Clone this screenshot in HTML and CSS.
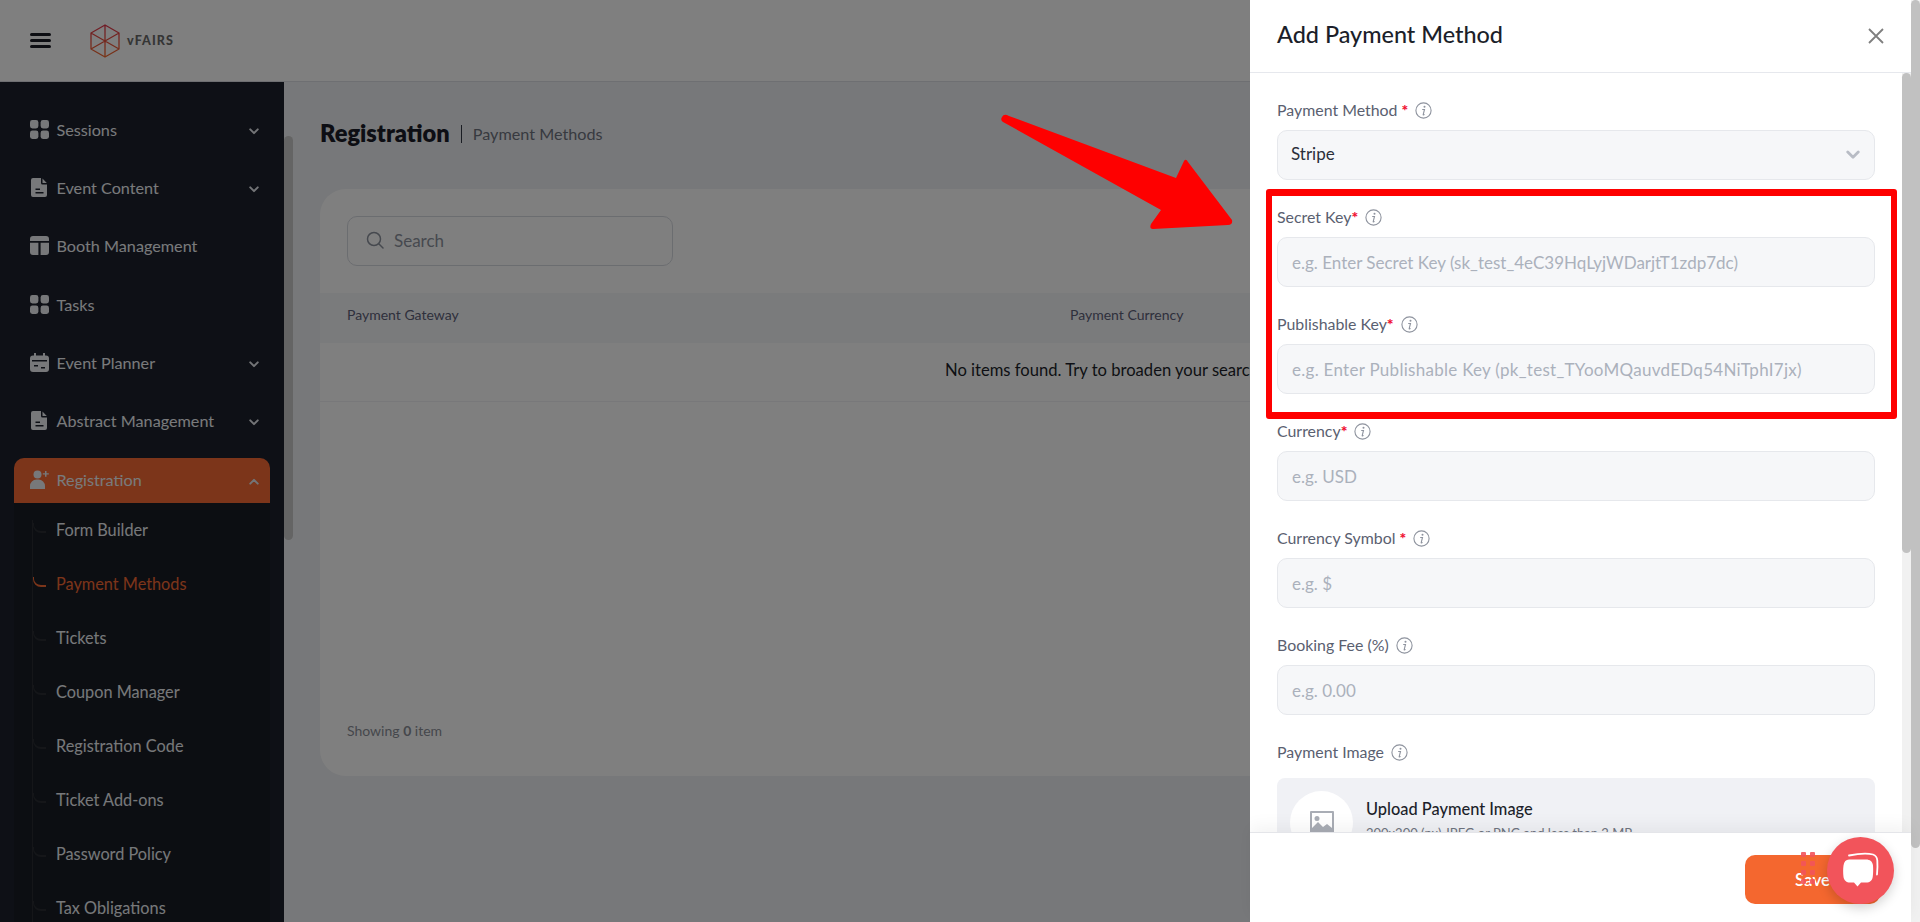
FILE: index.html
```html
<!DOCTYPE html>
<html lang="en">
<head>
<meta charset="utf-8">
<title>Payment Methods</title>
<link rel="stylesheet" href="styles.css">
</head>
<body>
<svg class="defs" width="0" height="0" aria-hidden="true">
  <symbol id="i-grid" viewBox="0 0 19 19"><rect x="0" y="0" width="8.4" height="8.4" rx="2.4"/><rect x="10.6" y="0" width="8.4" height="8.4" rx="2.4"/><rect x="0" y="10.6" width="8.4" height="8.4" rx="2.4"/><rect x="10.6" y="10.6" width="8.4" height="8.4" rx="2.4"/></symbol>
  <symbol id="i-doc" viewBox="0 0 19 19"><path fill-rule="evenodd" d="M3 0h8v5a1.5 1.5 0 0 0 1.500 1.500H17V17a2 2 0 0 1-2 2H3a2 2 0 0 1-2-2V2a2 2 0 0 1 2-2zM12.500 0.500 16.800 5H12.500zM5.500 10.500v1.400h4.500v-1.400zM5.500 14v1.400h8V14z"/></symbol>
  <symbol id="i-booth" viewBox="0 0 19 19"><path d="M3 0h13a3 3 0 0 1 3 3v2H0V3a3 3 0 0 1 3-3zM0 6.800h8.400V19H3a3 3 0 0 1-3-3zM10.600 6.800H19V16a3 3 0 0 1-3 3h-5.400z"/></symbol>
  <symbol id="i-cal" viewBox="0 0 19 19"><path fill-rule="evenodd" d="M4 0h2v2.500H13V0h2v2.500h1a3 3 0 0 1 3 3V16a3 3 0 0 1-3 3H3a3 3 0 0 1-3-3V5.500a3 3 0 0 1 3-3h1zM2 7v1.600h15V7zM4 12v1.600h4V12zM11 14v1.600h4V14z"/></symbol>
  <symbol id="i-user" viewBox="0 0 19 19"><circle cx="7.500" cy="4.500" r="4"/><path d="M0 19v-3a6.500 6.500 0 0 1 6.500-6.500h2A6.500 6.500 0 0 1 15 16v3z"/><path d="M15 1h1.500v2.200h2.300v1.400h-2.300v2.200H15V4.600h-2.200V3.200H15z"/></symbol>
  <symbol id="i-chev" viewBox="0 0 12 8"><path d="M1.500 1.500 6 6l4.500-4.500" fill="none" stroke="currentColor" stroke-width="2.400" stroke-linecap="round" stroke-linejoin="round"/></symbol>
  <symbol id="i-info" viewBox="0 0 17 17"><circle cx="8.500" cy="8.500" r="7.600" fill="none" stroke="currentColor" stroke-width="1.100"/><circle cx="9.500" cy="4.800" r="1" fill="currentColor"/><path d="M7.200 7.500h2.300l-1.300 5.100c-.1.500.4.600 1.300-.2" fill="none" stroke="currentColor" stroke-width="1.100"/></symbol>
</svg>

<div class="app">
  <header class="topbar">
    <div class="burger"><span></span><span></span><span></span></div>
    <svg class="logo" viewBox="0 0 30 34" width="30" height="34">
      <defs><linearGradient id="lg" x1="0" y1="0" x2="0" y2="1"><stop offset="0" stop-color="#e0374e"/><stop offset="1" stop-color="#f26a2e"/></linearGradient></defs>
      <path d="M15 1 29 9v16L15 33 1 25V9zM15 1v32M1 9l28 16M29 9 1 25" fill="none" stroke="url(#lg)" stroke-width="1.300" stroke-linejoin="round"/>
    </svg>
    <span class="logo-text">vFAIRS</span>
  </header>
  <div class="workspace">
    <nav class="sidebar">
      <a class="nav-item"><svg class="nav-icon"><use href="#i-grid"/></svg><span>Sessions</span><svg class="chev"><use href="#i-chev"/></svg></a>
      <a class="nav-item"><svg class="nav-icon"><use href="#i-doc"/></svg><span>Event Content</span><svg class="chev"><use href="#i-chev"/></svg></a>
      <a class="nav-item"><svg class="nav-icon"><use href="#i-booth"/></svg><span>Booth Management</span></a>
      <a class="nav-item"><svg class="nav-icon"><use href="#i-grid"/></svg><span>Tasks</span></a>
      <a class="nav-item"><svg class="nav-icon"><use href="#i-cal"/></svg><span>Event Planner</span><svg class="chev"><use href="#i-chev"/></svg></a>
      <a class="nav-item"><svg class="nav-icon"><use href="#i-doc"/></svg><span>Abstract Management</span><svg class="chev"><use href="#i-chev"/></svg></a>
      <a class="nav-item nav-open"><svg class="nav-icon"><use href="#i-user"/></svg><span>Registration</span><svg class="chev chev-up"><use href="#i-chev"/></svg></a>
      <div class="subnav">
        <a class="sub-item">Form Builder</a>
        <a class="sub-item sub-active">Payment Methods</a>
        <a class="sub-item">Tickets</a>
        <a class="sub-item">Coupon Manager</a>
        <a class="sub-item">Registration Code</a>
        <a class="sub-item">Ticket Add-ons</a>
        <a class="sub-item">Password Policy</a>
        <a class="sub-item">Tax Obligations</a>
      </div>
    </nav>
    <div class="side-scroll"><div class="side-thumb"></div></div>
    <main class="content">
      <div class="page-title"><h1>Registration</h1><span class="title-sep"></span><span class="crumb">Payment Methods</span></div>
      <section class="card">
        <div class="search">
          <svg width="18" height="18" viewBox="0 0 18 18"><circle cx="8" cy="8" r="6.500" fill="none" stroke="#8d939e" stroke-width="1.500"/><path d="m13 13 4 4" stroke="#8d939e" stroke-width="1.500" stroke-linecap="round"/></svg>
          <span>Search</span>
        </div>
        <div class="thead"><span>Payment Gateway</span><span>Payment Currency</span></div>
        <div class="empty-row">No items found. Try to broaden your search</div>
        <div class="card-foot">Showing <b>0</b> item</div>
      </section>
    </main>
  </div>
</div>

<div class="backdrop"></div>

<aside class="drawer">
  <div class="drawer-main">
    <div class="drawer-head">
      <h2>Add Payment Method</h2>
      <svg class="close" width="16" height="16" viewBox="0 0 16 16"><path d="m1 1 14 14M15 1 1 15" stroke="#7f7f7f" stroke-width="1.800"/></svg>
    </div>
    <div class="drawer-body">
      <form class="form">
        <div class="field"><label>Payment Method <i>*</i><svg class="info"><use href="#i-info"/></svg></label>
          <div class="control control-select"><span>Stripe</span><svg class="select-chev"><use href="#i-chev"/></svg></div></div>
        <div class="field"><label>Secret Key<i>*</i><svg class="info"><use href="#i-info"/></svg></label>
          <div class="control ph">e.g. Enter Secret Key (sk_test_4eC39HqLyjWDarjtT1zdp7dc)</div></div>
        <div class="field"><label>Publishable Key<i>*</i><svg class="info"><use href="#i-info"/></svg></label>
          <div class="control ph ph-wide">e.g. Enter Publishable Key (pk_test_TYooMQauvdEDq54NiTphI7jx)</div></div>
        <div class="field"><label>Currency<i>*</i><svg class="info"><use href="#i-info"/></svg></label>
          <div class="control ph">e.g. USD</div></div>
        <div class="field"><label>Currency Symbol <i>*</i><svg class="info"><use href="#i-info"/></svg></label>
          <div class="control ph">e.g. $</div></div>
        <div class="field"><label>Booking Fee (%)<svg class="info"><use href="#i-info"/></svg></label>
          <div class="control ph">e.g. 0.00</div></div>
        <div class="field"><label>Payment Image<svg class="info"><use href="#i-info"/></svg></label>
          <div class="upload">
            <div class="upload-circle"><svg width="26" height="26" viewBox="0 0 26 26"><path fill-rule="evenodd" d="M2 1h22a1 1 0 0 1 1 1v22a1 1 0 0 1-1 1H2a1 1 0 0 1-1-1V2a1 1 0 0 1 1-1zM3 3v15l6-6 5 5 4-3 5 4V3zM8 6a2.500 2.500 0 1 1 0 5 2.500 2.500 0 0 1 0-5z" fill="#a9adb5"/></svg></div>
            <div class="upload-text"><strong>Upload Payment Image</strong><small>200x200 (px) JPEG or PNG and less than 2 MB</small></div>
          </div></div>
      </form>
      <div class="inner-scroll"><div class="inner-thumb"></div></div>
    </div>
    <div class="drawer-foot"><button class="save" type="button">Save</button></div>
  </div>
  <div class="outer-scroll"><div class="outer-thumb"></div></div>
</aside>

<div class="red-box"></div>
<svg class="arrow" width="240" height="125" viewBox="0 0 240 125"><path d="M2 5Q4 1 9 4L176 66 184 49Q186 46 188 50L232 108Q233 113 228 113L153 117Q149 117 151 112L161 98 3 10Q0 8 2 5z" fill="#fe0000"/></svg>

<div class="drag-dots"><span></span><span></span><span></span><span></span><span></span><span></span><span></span><span></span></div>
<div class="chat">
  <svg width="67" height="67" viewBox="0 0 67 67"><path d="M22 18.500c10-2 20-2 24-1 3 1 4 3 4.300 6 .3 4 .2 9-.3 14" fill="none" stroke="#fff" stroke-width="1.800" stroke-linecap="round"/><path d="M22 22.500h17c4 0 6.500 2 7 6 .3 4 .2 8-.2 11-.5 4-3 6-6.500 6h-5.300L30.500 49.500 27 45.500h-4c-3.500 0-6-2-6.500-5.500-.5-4-.5-8 0-11.500.5-4 2.500-6 5.500-6z" fill="#fff"/></svg>
</div>
</body>
</html>
```
FILE: styles.css
```css
* { box-sizing: border-box; }
html, body { margin: 0; height: 100%; overflow: hidden; }
body { font-family: "Lato", "Open Sans", sans-serif; color: #1c1f2a; background: #eff1f4; }
.defs { position: absolute; }
.app { height: 922px; display: flex; flex-direction: column; }

.topbar { height: 82px; flex: none; background: #fff; border-bottom: 1px solid #dcdfe4; display: flex; align-items: center; padding-left: 30px; }
.burger { width: 21px; display: flex; flex-direction: column; gap: 3px; }
.burger span { height: 3px; background: #1b1d26; border-radius: 2px; }
.logo { margin-left: 39px; }
.logo-text { margin-left: 7px; font-size: 12.500px; font-weight: 900; letter-spacing: 1.100px; color: #6a6a6a; }

.workspace { flex: 1; display: flex; min-height: 0; }
.sidebar { width: 284px; flex: none; background: #1c202c; overflow: hidden; padding: 26px 14px 0; display: flex; flex-direction: column; gap: 11.400px; }
.nav-item { flex: none; height: 47px; display: flex; align-items: center; padding: 0 11px 5px 16px; color: #f2f5f8; font-size: 16.200px; border-radius: 10px; }
.nav-item span { flex: 1; margin-left: 7.500px; }
.nav-icon { width: 19px; height: 19px; fill: #eef1f5; flex: none; }
.chev { width: 10px; height: 7px; color: #e6e9ee; flex: none; margin-top: 4px; }
.chev-up { transform: rotate(180deg); }
.nav-open { background: #f86a34; border-radius: 10px 10px 0 0; }
.subnav { flex: none; margin: -13.900px 0 0; padding: 0; background: #181c24; position: relative; }
.subnav::before { content: ""; position: absolute; left: 18px; top: 17px; bottom: 0; width: 1px; background: #2a2d33; }
.sub-item { display: flex; align-items: center; height: 54px; padding-left: 42px; color: #eef1f5; font-size: 16.300px; position: relative; }
.sub-item::before { content: ""; position: absolute; left: 19px; top: 20px; width: 12px; height: 8px; border-left: 1px solid #2a2d33; border-bottom: 2px solid #2a2d33; border-radius: 0 0 0 8px; }
.sub-active { color: #f86a34; }
.sub-active::before { border-color: #f86a34; }

.side-scroll { width: 9px; flex: none; position: relative; }
.side-thumb { position: absolute; top: 54px; left: 0; width: 9px; height: 404px; background: #c8c8c8; border-radius: 5px; }

.content { flex: 1; padding: 0 36px 0 27px; min-width: 0; }
.page-title { height: 107px; display: flex; align-items: center; padding-bottom: 6px; }
.page-title h1 { margin: 0; font-size: 23.600px; font-weight: 800; color: #1a1c28; }
.title-sep { width: 1px; height: 18px; background: #343a46; margin: 2px 11px 0 11px; }
.crumb { font-size: 16.200px; color: #6f7480; margin-top: 2px; }
.card { height: 587px; background: #fff; border-radius: 26px; padding-top: 27px; display: flex; flex-direction: column; }
.search { margin-left: 27px; width: 326px; height: 50px; flex: none; border: 1px solid #d7dae1; border-radius: 10px; display: flex; align-items: center; gap: 10px; padding: 0 0 2px 18px; color: #8d939e; font-size: 17px; }
.thead { margin-top: 27px; height: 50px; flex: none; background: #f5f6f8; display: grid; grid-template-columns: 723px 1fr; align-items: center; padding: 0 0 7px 27px; font-size: 14px; color: #5d6178; }
.empty-row { height: 59px; flex: none; display: flex; align-items: center; justify-content: center; border-bottom: 1px solid #f0f1f4; padding-bottom: 4px; font-size: 16.600px; color: #1c1f2a; }
.card-foot { margin-top: auto; padding: 0 0 37px 27px; font-size: 14px; color: #8b8f98; }
.card-foot b { font-weight: 700; }

.backdrop { position: fixed; inset: 0; background: rgba(0, 0, 0, .5); }

.drawer { position: fixed; top: 0; right: 0; bottom: 0; width: 670px; background: #fff; display: flex; }
.drawer-main { flex: 1; min-width: 0; display: flex; flex-direction: column; }
.drawer-head { height: 73px; flex: none; border-bottom: 1px solid #e6e8ed; display: flex; align-items: center; justify-content: space-between; padding: 0 27px; }
.drawer-head h2 { margin: 0 0 5px; font-size: 23.400px; font-weight: 500; color: #1c1f2a; }
.drawer-body { flex: 1; min-height: 0; display: flex; overflow: hidden; }
.form { flex: 1; min-width: 0; padding: 25px 27px 0; display: flex; flex-direction: column; }
.field { flex: none; height: 107px; }
.field label { display: flex; align-items: center; height: 22px; margin-bottom: 10px; font-size: 15.900px; color: #5a6070; white-space: pre-wrap; }
.field label i { color: #f01030; font-style: normal; font-weight: 900; }
.info { width: 17px; height: 17px; color: #8e939e; margin-left: 7px; margin-top: 3px; flex: none; }
.control { height: 50px; background: #f6f7f9; border: 1px solid #e6e8ec; border-radius: 10px; display: flex; align-items: center; padding: 0 14px; font-size: 17px; }
.control-select { justify-content: space-between; color: #2b2f3a; padding: 0 14px 4px 13px; }
.select-chev { width: 14px; height: 10px; color: #b8bcc5; margin: 4px 0 0; }
.ph { color: #abb1bc; }
.ph-wide { letter-spacing: .28px; }
.upload { height: 110px; margin-top: 16px; background: #f0f1f5; border-radius: 8px; display: flex; padding: 13px; gap: 13px; }
.upload-circle { width: 63px; height: 63px; border-radius: 50%; background: #fff; display: flex; align-items: center; justify-content: center; flex: none; }
.upload-text { display: flex; flex-direction: column; gap: 7px; padding-top: 8px; }
.upload-text strong { font-size: 16.400px; font-weight: 500; color: #1c1f2a; }
.upload-text small { font-size: 13px; color: #6f7480; }
.inner-scroll { width: 9px; flex: none; background: #f1f1f1; }
.inner-thumb { height: 480px; background: #c1c1c1; border-radius: 5px; }
.drawer-foot { height: 90px; flex: none; border-top: 1px solid #e4e5e9; box-shadow: 0 -6px 16px rgba(0, 0, 0, .05); background: #fff; position: relative; display: flex; justify-content: flex-end; padding: 22px 31px 0 0; }
.save { width: 135px; height: 49px; border: 0; border-radius: 10px; background: #f4672f; color: #fff; font: 600 17px "Lato", sans-serif; }
.outer-scroll { width: 9px; flex: none; background: #f1f1f1; }
.outer-thumb { height: 848px; background: #c1c1c1; border-radius: 5px; }

.red-box { position: fixed; left: 1266px; top: 189px; width: 631px; height: 230px; border: solid #fe0000; border-width: 7px 6px; border-radius: 3px; }
.arrow { position: fixed; left: 1000px; top: 112px; }
.drag-dots { position: fixed; left: 1801px; top: 852px; display: grid; grid-template-columns: 5px 5px; gap: 4px; }
.drag-dots span { height: 5px; background: #f2545b; border-radius: 1px; opacity: .9; }
.chat { position: fixed; right: 26px; bottom: 18px; width: 67px; height: 67px; border-radius: 50%; background: #f2545b; box-shadow: 0 4px 12px rgba(0, 0, 0, .18); }
.chat svg { display: block; }
```
